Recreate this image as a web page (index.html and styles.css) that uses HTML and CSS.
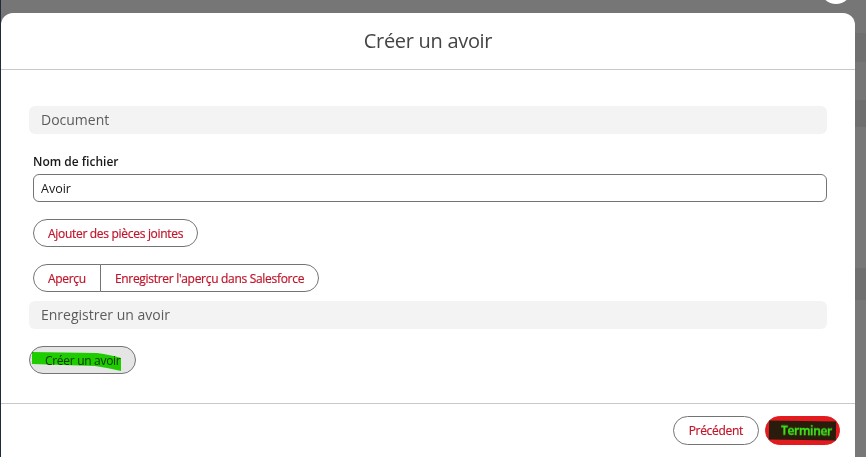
FILE: index.html
```html
<!DOCTYPE html>
<html lang="fr">
<head>
    <meta charset="UTF-8">
    <meta name="viewport" content="width=device-width, initial-scale=1.0">
    <title>Créer un avoir</title>
    <link rel="stylesheet" href="styles.css">
</head>
<body>
    <div class="backdrop">
        <button class="close-btn" aria-label="Fermer"></button>

        <div class="modal">
            <div class="modal-header">
                <h2>Créer un avoir</h2>
            </div>

            <div class="modal-body">
                <div class="section-title">Document</div>

                <div class="field">
                    <label for="fileName">Nom de fichier</label>
                    <input type="text" id="fileName" class="input" value="Avoir">
                </div>

                <div class="row">
                    <button class="btn">Ajouter des pièces jointes</button>
                </div>

                <div class="row">
                    <div class="btn-group">
                        <button class="btn">Aperçu</button>
                        <button class="btn">Enregistrer l'aperçu dans Salesforce</button>
                    </div>
                </div>

                <div class="section-title section-title-tight">Enregistrer un avoir</div>

                <div class="row">
                    <button class="btn btn-grey marked">
                        Créer un avoir
                        <!-- coup de surligneur -->
                        <svg class="highlight" width="92" height="22" viewBox="0 0 92 22">
                            <path d="M1 2 L66 3 Q80 5 90 8 L90 21 Q78 18 64 16 L1 14 Z" fill="#22e400"/>
                        </svg>
                    </button>
                </div>
            </div>

            <div class="modal-footer">
                <button class="btn">Précédent</button>
                <button class="btn btn-brand"><span class="redacted">Terminer</span></button>
            </div>
        </div>
    </div>
</body>
</html>
```

FILE: styles.css
```css
* {
    box-sizing: border-box;
}

body {
    margin: 0;
    font-family: "Open Sans", "Noto Sans", Arial, sans-serif;
    color: #3e3e3c;
    overflow: hidden;
}

/* fond grisé derrière la fenêtre */
.backdrop {
    position: relative;
    height: 457px;
    padding: 13px 11px 0 1px;
    background: linear-gradient(to bottom,
        #767676 0, #767676 33px,
        #707070 33px, #707070 62px,
        #767676 62px, #767676 100px,
        #6f6f6f 100px, #6f6f6f 127px,
        #787878 127px, #787878 268px,
        #707070 268px, #707070 300px,
        #787878 300px);
    box-shadow: inset 1px 0 0 #1e2b3c;
}

.close-btn {
    position: absolute;
    top: -28px;
    right: 14px;
    width: 32px;
    height: 32px;
    border: none;
    border-radius: 50%;
    background: #fff;
}

.modal {
    background: #fff;
    border-radius: 12px 12px 0 0;
    height: 100%;
    display: flex;
    flex-direction: column;
}

.modal-header {
    height: 57px;
    border-bottom: 1px solid #c9c9c9;
    display: flex;
    align-items: center;
    justify-content: center;
}

.modal-header h2 {
    margin: 0 0 1px;
    font-size: 20px;
    font-weight: 400;
    letter-spacing: -0.3px;
    color: #444;
}

.modal-body {
    padding: 36px 28px 0;
    height: 333px;
}

.section-title {
    height: 28px;
    line-height: 28px;
    padding-left: 12px;
    background: #f3f3f3;
    border-radius: 6px;
    font-size: 14px;
    color: #5c5c5c;
}

.section-title-tight {
    margin-top: 9px;
}

.field {
    margin: 19px 0 0 4px;
}

.field label {
    display: block;
    font-size: 12px;
    font-weight: 600;
    line-height: 18px;
    margin-bottom: 3px;
    color: #181818;
}

.input {
    width: 100%;
    height: 28px;
    padding: 0 7px;
    border: 1px solid #747474;
    border-radius: 6px;
    font: inherit;
    font-size: 12.5px;
    color: #181818;
}

.row {
    margin: 17px 0 0 4px;
    display: flex;
}

.btn {
    height: 28px;
    padding: 0 14px;
    border: 1px solid #747474;
    border-radius: 15px;
    background: #fff;
    font: inherit;
    font-size: 12px;
    letter-spacing: -0.3px;
    color: #c0152a;
    -webkit-text-stroke: 0.2px #c0152a;
    cursor: pointer;
}

.btn-group {
    display: flex;
}

.btn-group .btn:first-child {
    border-radius: 15px 0 0 15px;
}

.btn-group .btn + .btn {
    margin-left: -1px;
    border-radius: 0 15px 15px 0;
}

.btn-grey {
    margin-left: -4px;
    background: #e5e5e5;
    color: #3e3e3c;
    -webkit-text-stroke: 0;
    padding: 0 15px;
}

.marked {
    position: relative;
}

.highlight {
    position: absolute;
    left: 1px;
    top: 3px;
    mix-blend-mode: multiply;
}

.modal-footer {
    border-top: 1px solid #c9c9c9;
    padding: 12px 15px 0 0;
    display: flex;
    justify-content: flex-end;
    gap: 6px;
}

.modal-footer .btn {
    height: 29px;
    padding: 0 15px;
}

.btn-brand {
    background: #e31b1f;
    border-color: #e31b1f;
    padding: 0 3px !important;
}

.redacted {
    display: inline-block;
    background: #2a1c0c;
    color: #3ee21a;
    -webkit-text-stroke: 0.4px #3ee21a;
    font-weight: 600;
    padding: 1px 4px 1px 12px;
    transform: rotate(1deg);
}
```
